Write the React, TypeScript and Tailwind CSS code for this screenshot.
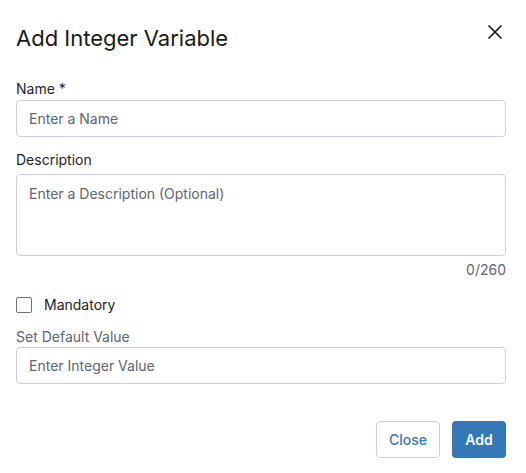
import { X } from 'lucide-react';

export default function App() {
  return (
    <div className="w-[526px] h-[473px] bg-white font-[Inter,Liberation_Sans,sans-serif] relative">
      <div className="flex items-center justify-between pl-[16px] pr-[19px] pt-[24px]">
        <h2 className="text-[22px] leading-[28px] text-[#1a1a1a]">Add Integer Variable</h2>
        <button className="text-[#1a1a1a] -mt-[12px]">
          <X size={24} strokeWidth={1.75} />
        </button>
      </div>

      <div className="pl-[16px] pr-[20px] pt-[27px] flex flex-col">
        <label className="text-[14px] leading-[20px] text-[#1f2328] mb-[1px]">Name *</label>
        <input
          placeholder="Enter a Name"
          className="h-[37px] w-full rounded-[4px] border border-[#ccd1d9] px-[12px] text-[14px] text-[#1f2328] placeholder:text-[#5c6670] outline-none"
        />

        <label className="text-[14px] leading-[20px] text-[#1f2328] mt-[13px] mb-[4px]">Description</label>
        <textarea
          placeholder="Enter a Description (Optional)"
          className="h-[82px] w-full resize-none rounded-[4px] border border-[#ccd1d9] px-[12px] py-[9px] text-[14px] leading-[20px] text-[#1f2328] placeholder:text-[#5c6670] outline-none block"
        />
        <div className="text-right text-[14px] leading-[20px] text-[#5c6670] mt-[4px]">0/260</div>

        <label className="flex items-center gap-[12px] mt-[15px]">
          <span className="w-[16px] h-[16px] rounded-[2px] border border-[#6b7280] bg-white" />
          <span className="text-[14px] leading-[20px] text-[#1f2328]">Mandatory</span>
        </label>

        <label className="text-[14px] leading-[20px] text-[#5c6670] mt-[12px]">Set Default Value</label>
        <input
          placeholder="Enter Integer Value"
          className="h-[37px] w-full rounded-[4px] border border-[#ccd1d9] px-[12px] text-[14px] text-[#1f2328] placeholder:text-[#5c6670] outline-none"
        />

        <div className="flex justify-end gap-[12px] mt-[37px]">
          <button className="h-[37px] w-[64px] rounded-[4px] border border-[#ccd1d9] bg-white text-[14px] font-medium text-[#3478b8]">
            Close
          </button>
          <button className="h-[37px] w-[54px] rounded-[4px] bg-[#3478b8] text-[14px] font-semibold text-white">
            Add
          </button>
        </div>
      </div>
    </div>
  );
}
